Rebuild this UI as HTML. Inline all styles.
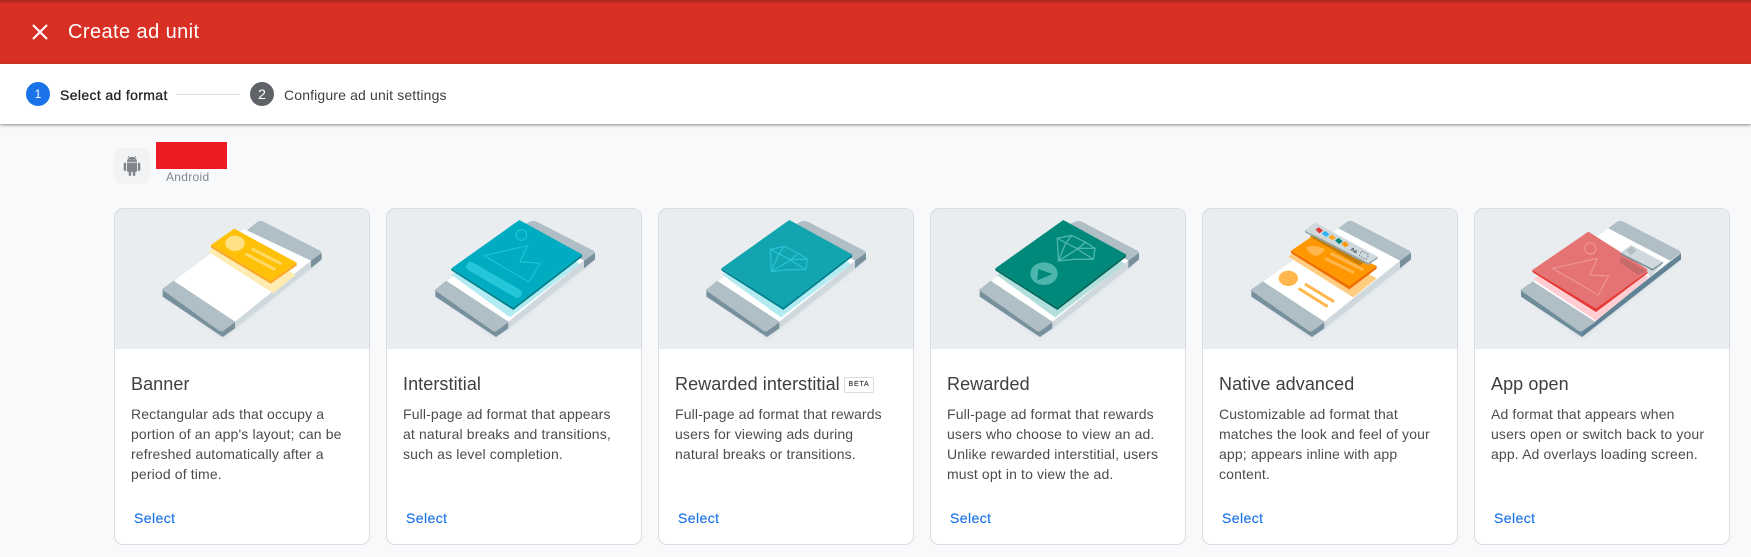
<!DOCTYPE html>
<html><head><meta charset="utf-8"><title>Create ad unit</title>
<style>
html,body{margin:0;padding:0;width:1751px;height:557px;overflow:hidden;background:#f8f9fa;font-family:"Liberation Sans",sans-serif;color:#3c4043}
.a{position:absolute;white-space:nowrap}
#top{position:absolute;left:0;top:0;width:1751px;height:64px;background:#d93025}
#topsh{position:absolute;left:0;top:0;width:1751px;height:4px;background:linear-gradient(#a8281f,#d93025)}
#step{position:absolute;left:0;top:64px;width:1751px;height:60px;background:#fff;box-shadow:0 1px 3px rgba(60,64,67,.6)}
.card{position:absolute;top:208px;width:256px;height:337px;box-sizing:border-box;background:#fff;border:1px solid #dadce0;border-radius:9px;overflow:hidden}
.card i{display:block;position:absolute;left:-1px;top:-1px;width:258px;height:141px;background:#e9edf0}
.t{position:absolute;left:16px;top:163px;font-size:18px;line-height:24px;color:#3c4043;white-space:nowrap;letter-spacing:.08px}
.d{position:absolute;left:16px;top:195px;font-size:14px;line-height:20px;color:#4a4d50;white-space:nowrap;letter-spacing:.14px}
.s{position:absolute;left:19px;top:299px;font-size:14px;line-height:20px;color:#1a73e8;letter-spacing:.43px;-webkit-text-stroke:.15px #1a73e8}
.b{position:absolute;left:0;top:0;pointer-events:none}
</style></head><body>
<div id="top"></div><div id="topsh"></div>
<svg class="b" style="left:28px;top:22px" width="24" height="20" viewBox="0 0 24 20"><path d="M5 3L19 17M19 3L5 17" stroke="#fff" stroke-width="2" fill="none"/></svg>
<div class="a" style="left:68px;top:20px;font-size:20px;line-height:24px;color:#fff;letter-spacing:.42px">Create ad unit</div>
<div id="step"></div>
<div class="a" style="left:26px;top:82px;width:24px;height:24px;border-radius:50%;background:#1a73e8;color:#fff;font-size:12px;line-height:24px;text-align:center">1</div>
<div class="a" style="left:60px;top:85px;font-size:14px;line-height:20px;color:#202124;letter-spacing:.36px;-webkit-text-stroke:.3px #202124">Select ad format</div>
<div class="a" style="left:176px;top:94px;width:64px;height:1px;background:#dadce0"></div>
<div class="a" style="left:250px;top:82px;width:24px;height:24px;border-radius:50%;background:#5f6368;color:#fff;font-size:14px;line-height:24px;text-align:center">2</div>
<div class="a" style="left:284px;top:85px;font-size:14px;line-height:20px;color:#3c4043;letter-spacing:.15px">Configure ad unit settings</div>
<div class="a" style="left:114px;top:148px;width:36px;height:36px;border-radius:9px;background:#f1f3f4"></div>
<svg class="b" style="left:122px;top:156px" width="20" height="20" viewBox="0 0 24 24"><path fill="#80868b" d="M6 18c0 .55.45 1 1 1h1v3.5c0 .83.67 1.5 1.5 1.5s1.5-.67 1.5-1.5V19h2v3.5c0 .83.67 1.5 1.5 1.5s1.5-.67 1.5-1.5V19h1c.55 0 1-.45 1-1V8H6v10zM3.500 8C2.670 8 2 8.670 2 9.500v7c0 .83.67 1.500 1.500 1.500S5 17.330 5 16.500v-7C5 8.670 4.330 8 3.500 8zm17 0c-.83 0-1.500.67-1.500 1.500v7c0 .83.67 1.500 1.500 1.500s1.500-.67 1.500-1.500v-7c0-.83-.67-1.500-1.500-1.500zm-4.970-5.840l1.300-1.300c.2-.2.2-.51 0-.71-.2-.2-.51-.2-.71 0l-1.480 1.480C13.850 1.230 12.950 1 12 1c-.96 0-1.860.23-2.660.63L7.850.15c-.2-.2-.51-.2-.71 0-.2.2-.2.51 0 .71l1.310 1.310C6.970 3.260 6 5.010 6 7h12c0-1.990-.97-3.750-2.470-4.840zM10 5H9V4h1v1zm5 0h-1V4h1v1z"/></svg>
<div class="a" style="left:156px;top:142px;width:71px;height:27px;background:#ed1c24"></div>
<div class="a" style="left:166px;top:169px;font-size:12px;line-height:16px;color:#80868b;letter-spacing:.3px">Android</div>

<div class="card" style="left:114px"><i></i><div class="t">Banner</div><div class="d">Rectangular ads that occupy a<br>portion of an app's layout; can be<br>refreshed automatically after a<br>period of time.</div><div class="s">Select</div></div>
<div class="card" style="left:386px"><i></i><div class="t">Interstitial</div><div class="d">Full-page ad format that appears<br>at natural breaks and transitions,<br>such as level completion.</div><div class="s">Select</div></div>
<div class="card" style="left:658px"><i></i><div class="t">Rewarded interstitial</div><div class="a" style="left:185px;top:168px;width:28px;height:14px;border:1px solid #dadce0;border-radius:2px;font-size:7px;line-height:14px;text-align:center;letter-spacing:.8px;color:#3c4043;-webkit-text-stroke:.2px #3c4043">BETA</div><div class="d">Full-page ad format that rewards<br>users for viewing ads during<br>natural breaks or transitions.</div><div class="s">Select</div></div>
<div class="card" style="left:930px"><i></i><div class="t">Rewarded</div><div class="d">Full-page ad format that rewards<br>users who choose to view an ad.<br>Unlike rewarded interstitial, users<br>must opt in to view the ad.</div><div class="s">Select</div></div>
<div class="card" style="left:1202px"><i></i><div class="t">Native advanced</div><div class="d">Customizable ad format that<br>matches the look and feel of your<br>app; appears inline with app<br>content.</div><div class="s">Select</div></div>
<div class="card" style="left:1474px"><i></i><div class="t">App open</div><div class="d">Ad format that appears when<br>users open or switch back to your<br>app. Ad overlays loading screen.</div><div class="s">Select</div></div>

<svg class="b" width="1751" height="557" viewBox="0 0 1751 557">
<defs><filter id="bl" x="-20%" y="-20%" width="140%" height="140%"><feGaussianBlur stdDeviation="6"/></filter></defs>

<!-- Banner -->
<g transform="translate(100,200) scale(.33333)">
<polygon points="195,285 368,414 662,180 480,90" fill="#90a4ae" opacity=".28" filter="url(#bl)"/>
<path d="M188,268V290L368,411V390Z" fill="#78909c"/><path d="M368,390L405,365V385L368,411Z" fill="#78909c"/>
<path d="M405,365L635,180V203L405,385Z" fill="#cfd8dc"/><path d="M633,182L665,158V178L633,204Z" fill="#78909c"/>
<path d="M188,268L222,243L405,365L368,392Q364,394 358,391Z" fill="#b0bec5" stroke="#b0bec5" stroke-linejoin="round" stroke-width="3"/>
<path d="M440,91L472,66Q482,60 490,65L660,152Q667,157 663,160L633,182Z" fill="#b0bec5"/>
<polygon points="222,243 432,87 633,182 405,365" fill="#fff"/>
<polygon points="325,155 400,105 587,225 520,280" fill="#ffecb3"/>
<polygon points="333,135 333,143 512,251 590,197 590,188 512,243" fill="#f9a825"/>
<polygon points="333,135 403,86 590,188 512,243" fill="#ffc107"/>
<ellipse cx="405" cy="130" rx="29" ry="23" fill="#ffe082"/>
<path d="M455,146L545,192M436,161L526,209" stroke="#ffd966" stroke-width="9"/>
</g>

<!-- Interstitial -->
<g transform="translate(380,200) scale(.33333)">
<polygon points="173,285 348,414 642,180 460,90" fill="#90a4ae" opacity=".28" filter="url(#bl)"/>
<path d="M166,270V290L348,411V392Z" fill="#78909c"/><path d="M348,392L385,365V385L348,411Z" fill="#78909c"/>
<path d="M385,365L612,185V205L385,385Z" fill="#cfd8dc"/><path d="M612,182L645,158V178L612,205Z" fill="#78909c"/>
<path d="M166,270L200,243L385,365L348,392Q344,394 338,391Z" fill="#b0bec5" stroke="#b0bec5" stroke-linejoin="round" stroke-width="3"/>
<path d="M430,75L450,65Q460,60 470,65L640,152Q647,157 643,160L612,182Z" fill="#b0bec5"/>
<polygon points="200,243 430,75 612,182 385,365" fill="#fff"/>
<polygon points="215,225 420,80 600,192 390,352" fill="#b2ebf2"/>
<polygon points="214,205 214,211 400,330 606,171 606,163 400,322" fill="#00838f"/>
<polygon points="214,205 418,60 606,163 400,322" fill="#00acc1"/>
<circle cx="424" cy="105" r="16" fill="none" stroke="#26c6da" stroke-width="3"/>
<path d="M312,167L442,137L420,185L480,190L447,246Z" fill="none" stroke="#26c6da" stroke-width="3"/>
<path d="M272,199L412,280" stroke="#26c6da" stroke-width="27" stroke-linecap="round"/>
</g>

<!-- Rewarded interstitial -->
<g transform="translate(650,200) scale(.33333)">
<polygon points="176,285 351,414 645,180 463,90" fill="#90a4ae" opacity=".28" filter="url(#bl)"/>
<path d="M169,270V290L351,411V392Z" fill="#78909c"/><path d="M351,392L388,365V385L351,411Z" fill="#78909c"/>
<path d="M388,365L615,185V205L388,385Z" fill="#cfd8dc"/><path d="M615,182L648,158V178L615,205Z" fill="#78909c"/>
<path d="M169,270L203,243L388,365L351,392Q347,394 341,391Z" fill="#b0bec5" stroke="#b0bec5" stroke-linejoin="round" stroke-width="3"/>
<path d="M433,75L453,65Q463,60 473,65L643,152Q650,157 646,160L615,182Z" fill="#b0bec5"/>
<polygon points="203,243 433,75 615,182 388,365" fill="#fff"/>
<polygon points="218,225 420,80 603,192 393,352" fill="#b2ebf2"/>
<polygon points="214,205 214,211 400,330 606,171 606,163 400,322" fill="#00838f"/>
<polygon points="214,205 418,60 606,163 400,322" fill="#12a4af"/>
<g fill="none" stroke="#26c0d3" stroke-width="4"><polygon points="361,148 403,139 445,160 473,178 467,209 410,209 364,215"/><path d="M361,148L418,178L467,209M403,139L385,165L364,215M445,160L418,182L364,215M418,178L473,178"/></g>
</g>

<!-- Rewarded -->
<g transform="translate(920,200) scale(.33333)">
<polygon points="186,285 360,414 654,180 475,90" fill="#90a4ae" opacity=".28" filter="url(#bl)"/>
<path d="M179,270V290L360,411V392Z" fill="#78909c"/><path d="M360,392L397,365V385L360,411Z" fill="#78909c"/>
<path d="M397,365L625,185V205L397,385Z" fill="#cfd8dc"/><path d="M625,182L657,158V178L625,205Z" fill="#78909c"/>
<path d="M179,270L213,243L397,365L360,392Q356,394 350,391Z" fill="#b0bec5" stroke="#b0bec5" stroke-linejoin="round" stroke-width="3"/>
<path d="M445,75L465,65Q475,60 485,65L652,152Q659,157 655,160L625,182Z" fill="#b0bec5"/>
<polygon points="213,243 445,75 625,182 397,365" fill="#fff"/>
<polygon points="230,225 432,80 615,192 405,352" fill="#b2dfdb"/>
<polygon points="226,205 226,211 412,330 618,171 618,163 412,322" fill="#00695c"/>
<polygon points="226,205 430,60 618,163 412,322" fill="#00897b"/>
<g fill="none" stroke="#4db6ac" stroke-width="4"><polygon points="412,115 455,106 497,127 525,145 520,178 462,178 415,183"/><path d="M412,115L469,145L520,178M455,106L436,132L415,183M497,127L469,149L415,183M469,145L525,145"/></g>
<ellipse cx="372" cy="221" rx="41" ry="34" fill="#4db6ac"/>
<polygon points="355,207 398,222 352,241" fill="#00897b"/>
</g>

<!-- Native advanced -->
<g transform="translate(1200,200) scale(.33333)">
<polygon points="160,285 336,414 630,180 450,90" fill="#90a4ae" opacity=".28" filter="url(#bl)"/>
<path d="M154,270V290L336,411V392Z" fill="#78909c"/><path d="M336,392L373,365V385L336,411Z" fill="#78909c"/>
<path d="M373,365L602,182V205L373,385Z" fill="#cfd8dc"/><path d="M600,182L633,158V178L600,205Z" fill="#78909c"/>
<path d="M154,270L190,245L373,365L336,392Q332,394 326,391Z" fill="#b0bec5" stroke="#b0bec5" stroke-linejoin="round" stroke-width="3"/>
<path d="M415,85L440,66Q450,60 460,65L628,152Q635,157 631,160L600,182Z" fill="#b0bec5"/>
<polygon points="190,245 415,85 600,182 373,365" fill="#fff"/>
<polygon points="265,170 330,125 530,235 460,292" fill="#ffcc80"/>
<polygon points="273,152 273,159 448,268 530,206 530,198 448,258" fill="#ef6c00"/>
<polygon points="273,152 340,107 530,198 448,258" fill="#ff9800"/>
<path d="M318,142Q345,132 375,148Q365,165 345,168Q325,160 318,142Z" fill="#ffb74d"/>
<path d="M392,160L490,210M375,175L462,218" stroke="#ffb74d" stroke-width="9"/>
<polygon points="330,110 350,98 500,180 480,197" fill="#c67c00"/>
<polygon points="315,92 315,97 505,195 533,175 533,170 505,189" fill="#90a4ae"/>
<polygon points="315,91 345,67 533,170 505,189" fill="#cfd8dc"/>
<polygon points="346,88 357,82 369,92 358,100" fill="#e53935"/>
<polygon points="365,100 376,93 389,103 378,111" fill="#29b6f6"/>
<polygon points="385,111 396,104 408,113 397,121" fill="#ffa726"/>
<polygon points="405,121 416,114 428,124 417,132" fill="#00897b"/>
<polygon points="424,131 435,124 447,134 436,142" fill="#ff9800"/>
<text x="452" y="156" font-size="16" font-weight="700" fill="#37474f" font-family="Liberation Sans,sans-serif" transform="rotate(28 462 150)">Aa</text>
<rect x="480" y="158" width="24" height="16" fill="none" stroke="#546e7a" stroke-width="2.500" stroke-dasharray="4 5" transform="rotate(28 492 166)"/>
<ellipse cx="265" cy="235" rx="29" ry="23" fill="#ffb74d"/>
<path d="M315,252L402,305M296,265L383,320" stroke="#ffb74d" stroke-width="9"/>
</g>

<!-- App open -->
<g transform="translate(1470,200) scale(.33333)">
<polygon points="160,285 336,414 630,180 450,90" fill="#90a4ae" opacity=".28" filter="url(#bl)"/>
<path d="M153,270V290L336,411V392Z" fill="#6f8c9b"/>
<path d="M336,392L633,160V178L336,411Z" fill="#618295"/>
<path d="M153,270L190,245L375,365L336,392Q332,394 326,391Z" fill="#b0bec5" stroke="#b0bec5" stroke-linejoin="round" stroke-width="3"/>
<path d="M415,85L440,66Q450,60 460,65L628,152Q635,157 631,160L600,182Z" fill="#b0bec5"/>
<polygon points="190,245 415,85 600,182 375,365" fill="#fff"/>
<polygon points="190,238 355,120 538,232 378,362" fill="#ffcdd2"/>
<polygon points="187,210 187,216 378,336 538,216 538,211 378,325" fill="#e53935"/>
<polygon points="187,210 355,95 538,211 378,325" fill="#e57373"/>
<circle cx="361" cy="145" r="17" fill="none" stroke="#ef9a9a" stroke-width="3"/>
<path d="M248,205L382,175L360,225L416,228L385,285Z" fill="none" stroke="#ef9a9a" stroke-width="3"/>
<polygon points="452,168 530,215 505,225 450,188" fill="#c96a6a"/>
<polygon points="530,212 580,185 580,190 540,232" fill="#cfd8dc"/>
<polygon points="452,158 452,163 548,212 578,190 578,186 548,206" fill="#78909c"/>
<polygon points="452,158 483,135 578,186 548,206" fill="#cfd8dc"/>
<polygon points="468,150 485,140 500,152 483,165" fill="#b0bec5"/>
</g>
</svg>
</body></html>
